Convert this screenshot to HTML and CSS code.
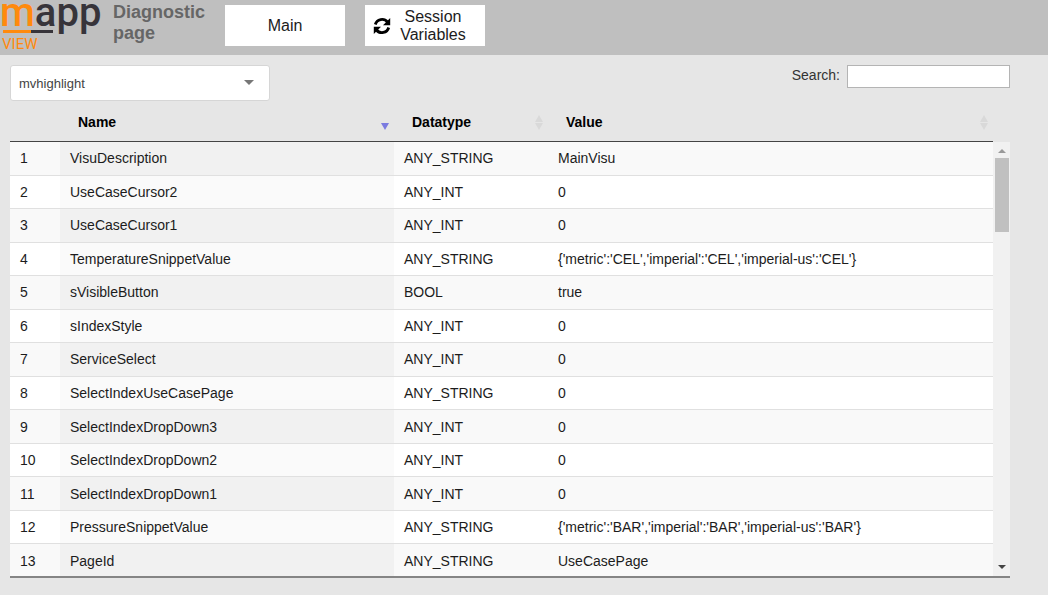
FILE: index.html
```html
<!DOCTYPE html>
<html lang="en">
<head>
<meta charset="utf-8">
<title>Diagnostic page</title>
<link rel="stylesheet" href="styles.css">
</head>
<body>
<header class="topbar">
  <svg class="logo" viewBox="0 0 104 55" role="img" aria-label="mapp View">
    <text class="logo-word" x="0" y="26"><tspan class="logo-orange">m</tspan>app</text>
    <rect class="logo-orange" x="3" y="30" width="28" height="3"/>
    <rect class="logo-dark" x="31" y="30" width="22" height="3"/>
    <text class="logo-view" x="2" y="49">VIEW</text>
  </svg>
  <h1 class="title">Diagnostic page</h1>
  <nav class="nav">
    <button class="nav-button" type="button">Main</button>
    <button class="nav-button nav-button-icon" type="button">
      <svg class="refresh" viewBox="0 0 18 18" aria-hidden="true">
        <path d="M2.300 7.500A7 7 0 0 1 14.500 5M15.700 10.500A7 7 0 0 1 3.500 13" fill="none" stroke="#000" stroke-width="2.800"/>
        <path d="M17.200 1v7.200H10zM.8 17V9.800H8z"/>
      </svg>
      <span class="nav-text">Session Variables</span>
    </button>
  </nav>
</header>
<main class="content">
  <div class="toolbar">
    <div class="select-wrap">
      <select class="select" aria-label="Highlight"><option>mvhighlight</option></select>
      <svg class="caret" viewBox="0 0 10 5" aria-hidden="true"><path d="M0 0h10L5 5z"/></svg>
    </div>
    <div class="search">
      <label for="search">Search:</label>
      <input class="search-input" id="search" type="search">
    </div>
  </div>
  <div class="head-wrap">
    <table class="grid head">
      <colgroup><col class="c-index"><col class="c-name"><col class="c-type"><col></colgroup>
      <thead><tr>
        <th></th>
        <th><div class="th">Name<svg class="sort sort-active" viewBox="0 0 8 15"><path d="M0 8h8l-4 7z"/></svg></div></th>
        <th><div class="th">Datatype<svg class="sort" viewBox="0 0 8 15"><path d="M0 7h8L4 0zM0 8h8l-4 7z"/></svg></div></th>
        <th><div class="th">Value<svg class="sort" viewBox="0 0 8 15"><path d="M0 7h8L4 0zM0 8h8l-4 7z"/></svg></div></th>
      </tr></thead>
    </table>
  </div>
  <div class="pane">
    <div class="rows">
      <table class="grid body">
        <colgroup><col class="c-index"><col class="c-name"><col class="c-type"><col></colgroup>
        <tbody>
          <tr><td>1</td><td>VisuDescription</td><td>ANY_STRING</td><td>MainVisu</td></tr>
          <tr><td>2</td><td>UseCaseCursor2</td><td>ANY_INT</td><td>0</td></tr>
          <tr><td>3</td><td>UseCaseCursor1</td><td>ANY_INT</td><td>0</td></tr>
          <tr><td>4</td><td>TemperatureSnippetValue</td><td>ANY_STRING</td><td>{'metric':'CEL','imperial':'CEL','imperial-us':'CEL'}</td></tr>
          <tr><td>5</td><td>sVisibleButton</td><td>BOOL</td><td>true</td></tr>
          <tr><td>6</td><td>sIndexStyle</td><td>ANY_INT</td><td>0</td></tr>
          <tr><td>7</td><td>ServiceSelect</td><td>ANY_INT</td><td>0</td></tr>
          <tr><td>8</td><td>SelectIndexUseCasePage</td><td>ANY_STRING</td><td>0</td></tr>
          <tr><td>9</td><td>SelectIndexDropDown3</td><td>ANY_INT</td><td>0</td></tr>
          <tr><td>10</td><td>SelectIndexDropDown2</td><td>ANY_INT</td><td>0</td></tr>
          <tr><td>11</td><td>SelectIndexDropDown1</td><td>ANY_INT</td><td>0</td></tr>
          <tr><td>12</td><td>PressureSnippetValue</td><td>ANY_STRING</td><td>{'metric':'BAR','imperial':'BAR','imperial-us':'BAR'}</td></tr>
          <tr><td>13</td><td>PageId</td><td>ANY_STRING</td><td>UseCasePage</td></tr>
        </tbody>
      </table>
    </div>
    <div class="scrollbar" aria-hidden="true">
      <svg class="arrow arrow-up" viewBox="0 0 8 4"><path d="M0 4h8L4 0z"/></svg>
      <div class="track"><div class="thumb"></div></div>
      <svg class="arrow" viewBox="0 0 8 4"><path d="M0 0h8L4 4z"/></svg>
    </div>
  </div>
</main>
</body>
</html>
```
FILE: styles.css
```css
* { box-sizing: border-box; }
body {
  margin: 0;
  height: 100vh;
  display: flex;
  flex-direction: column;
  background: #e6e6e6;
  color: #1c1c1c;
  font: 14px/20px "Liberation Sans", Arial, sans-serif;
}
button, input, select { font-family: inherit; }

.topbar {
  display: flex;
  align-items: flex-start;
  height: 55px;
  flex: none;
  background: #bfbfbf;
}
.logo { width: 104px; height: 55px; flex: none; overflow: visible; }
.logo-word { font: 500 40px Roboto, sans-serif; fill: #37343a; }
.logo-word .logo-orange, .logo-orange { fill: #ff8a0d; }
.logo-dark { fill: #37343a; }
.logo-view { font: 400 15px Roboto, sans-serif; fill: #ff8a0d; }
.title {
  width: 112px;
  margin: 0;
  padding: 2px 0 0 9px;
  color: #666;
  font-size: 18px;
  line-height: 21px;
}
.nav { display: flex; gap: 20px; padding: 5px 0 0 9px; }
.nav-button {
  display: flex;
  align-items: center;
  justify-content: center;
  gap: 9px;
  width: 120px;
  height: 41px;
  padding: 0;
  border: 0;
  background: #fff;
  color: #1c1c1c;
  font-size: 16px;
  line-height: 18px;
}
.nav-button-icon { justify-content: flex-start; padding-left: 8px; }
.refresh { width: 18px; height: 18px; flex: none; }
.nav-text { width: 66px; }

.content {
  flex: 1;
  min-height: 0;
  display: flex;
  flex-direction: column;
  padding: 10px 38px 17px 10px;
}
.toolbar { display: flex; justify-content: space-between; align-items: flex-start; }
.select-wrap { position: relative; width: 260px; }
.select {
  appearance: none;
  display: block;
  width: 100%;
  height: 36px;
  padding: 0 8px;
  border: 1px solid #d6d6d6;
  border-radius: 3px;
  background: #fff;
  color: #444;
  font-size: 13px;
}
.caret {
  position: absolute;
  right: 16px;
  top: 15px;
  width: 10px;
  height: 5px;
  fill: #777;
  pointer-events: none;
}
.search { display: flex; gap: 7px; color: #333; }
.search-input {
  width: 163px;
  height: 23px;
  border: 1px solid #b4b4b4;
  border-radius: 0;
  background: #fff;
}

.grid { width: 100%; border-collapse: separate; border-spacing: 0; table-layout: fixed; }
.c-index { width: 50px; }
.c-name { width: 334px; }
.c-type { width: 154px; }
.head-wrap { padding-right: 17px; }
.head th {
  height: 41px;
  padding: 2px 5px 0 18px;
  border-bottom: 1px solid #444;
  color: #000;
  text-align: left;
}
.th { display: flex; align-items: center; justify-content: space-between; }
.sort { width: 8px; height: 15px; fill: #d9d9d9; }
.sort-active { fill: #7b7be0; }

.pane { flex: 1; min-height: 0; display: flex; border-bottom: 2px solid #858585; }
.rows { flex: 1; min-width: 0; overflow: hidden; }
.body { height: 436px; background: #fff; }
.body td { padding: 0 10px; border-bottom: 1px solid #e0e0e0; white-space: nowrap; }
.body td:nth-child(2) { background: #fafafa; }
.body tr:nth-child(odd) td { background: #f9f9f9; }
.body tr:nth-child(odd) td:nth-child(2) { background: #f1f1f1; }

.scrollbar {
  display: flex;
  flex-direction: column;
  align-items: center;
  width: 17px;
  padding: 7px 0;
  background: #f1f1f1;
}
.arrow { width: 8px; height: 4px; flex: none; fill: #444; }
.arrow-up { fill: #999; }
.track { flex: 1; padding: 5px 0; }
.thumb { width: 14px; height: 74px; background: #c0c0c0; }
```
